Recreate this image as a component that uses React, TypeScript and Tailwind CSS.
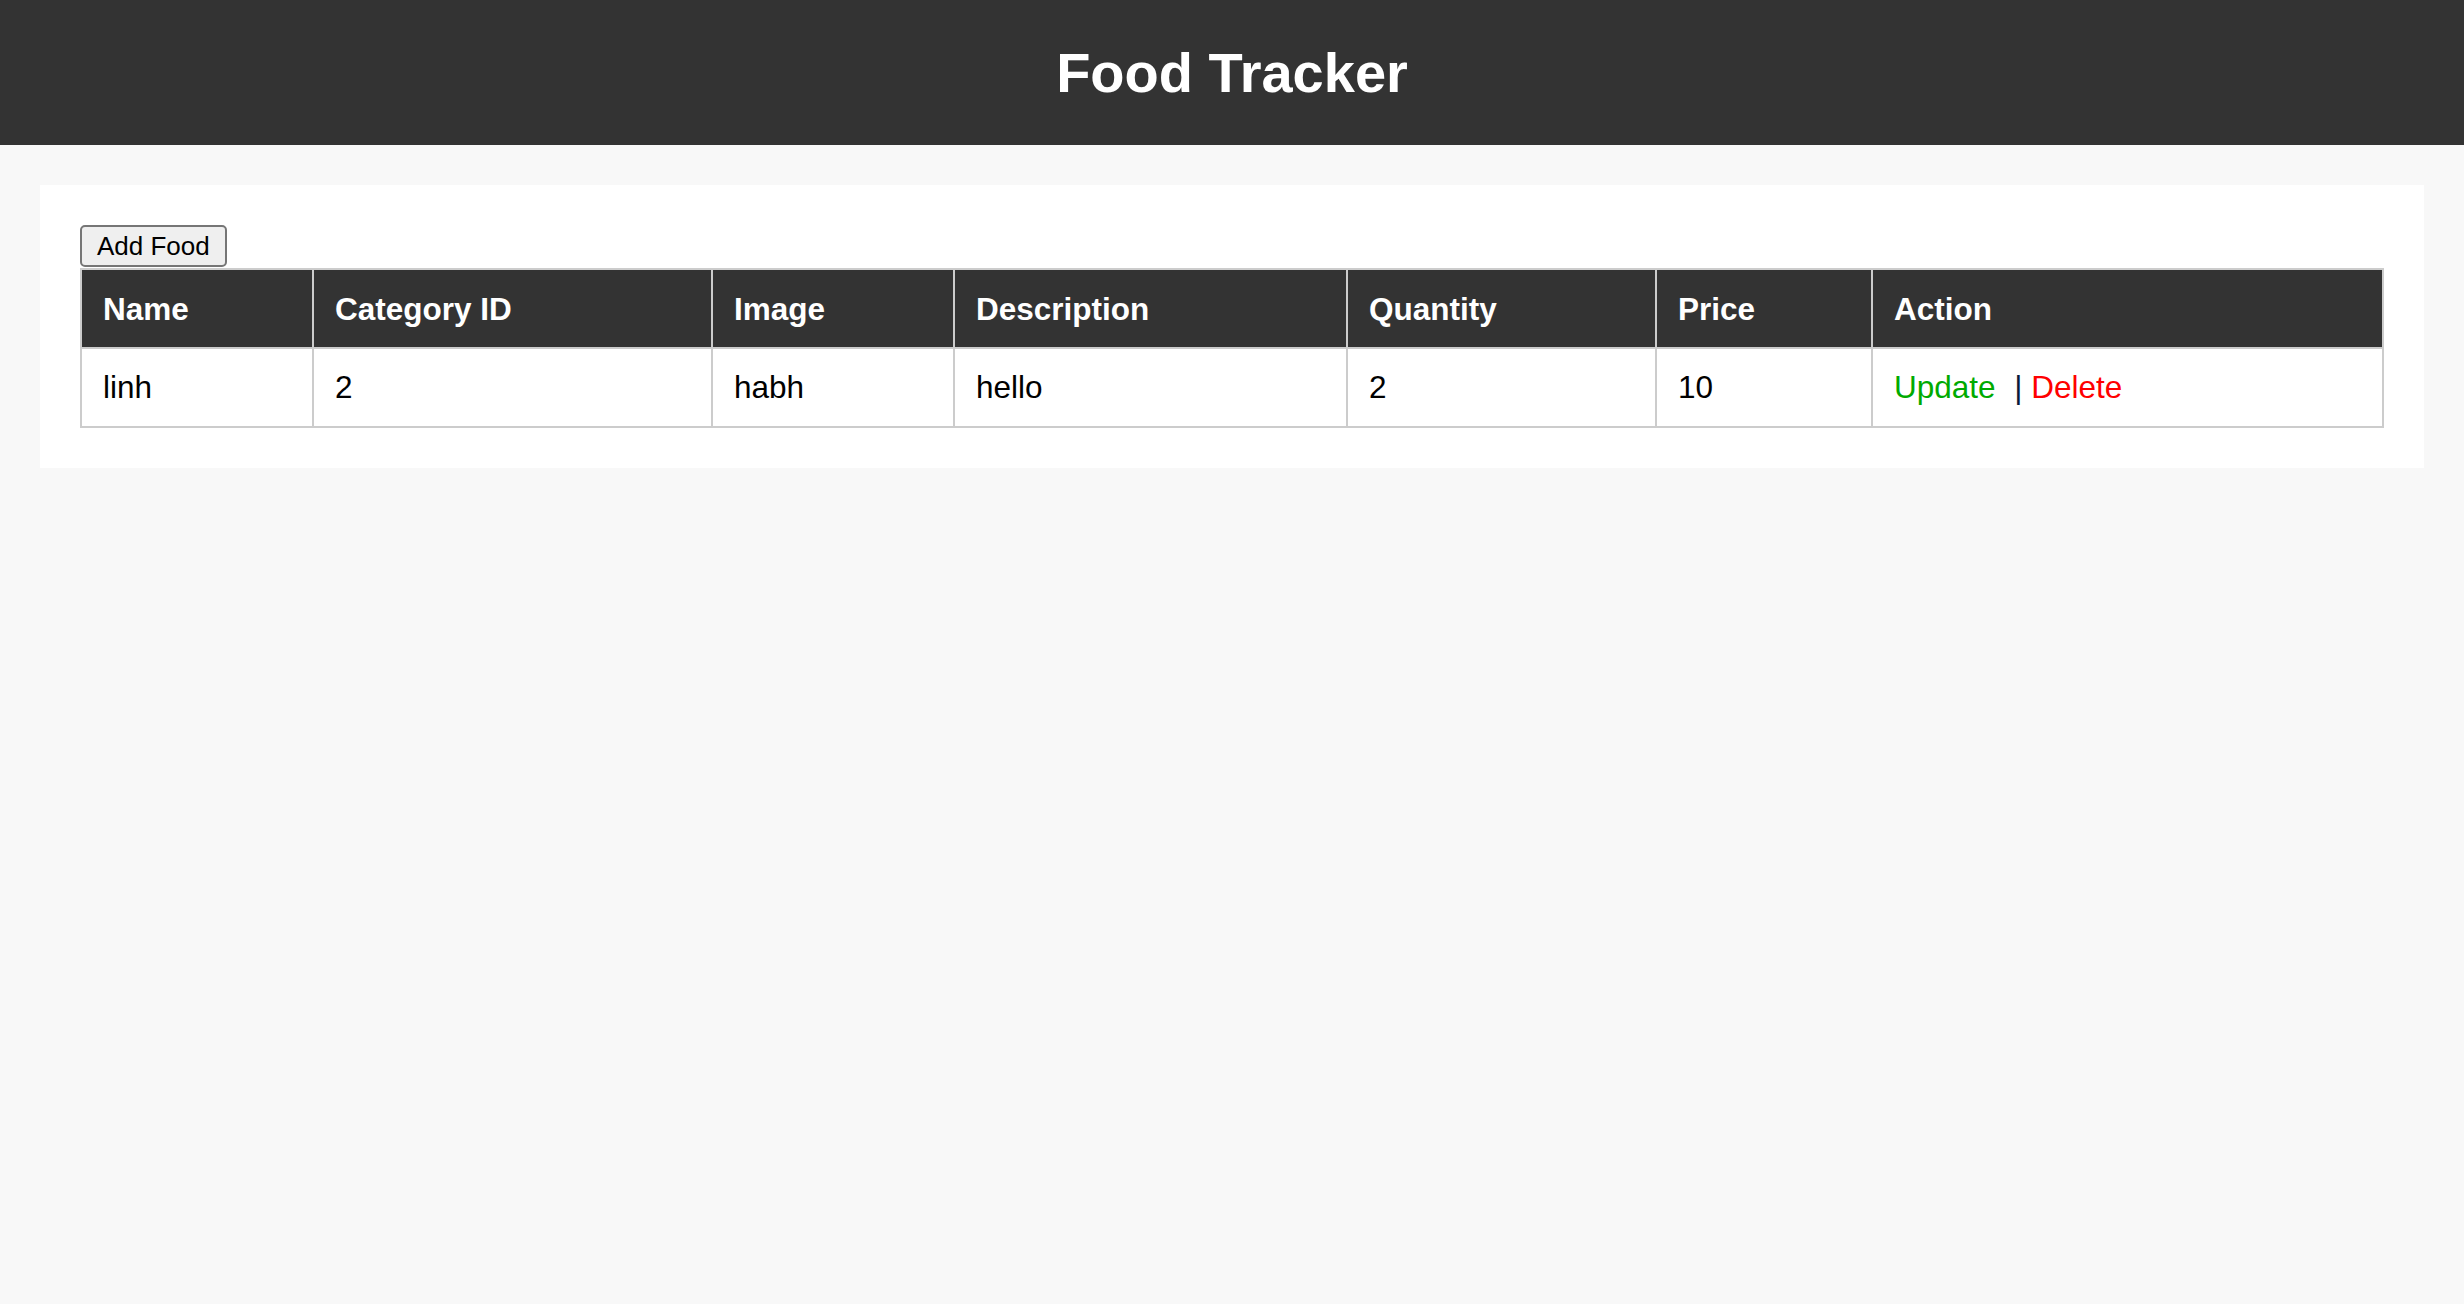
import React from "react";

interface Food {
    name: string;
    categoryId: number;
    image: string;
    description: string;
    quantity: number;
    price: number;
}

const foods: Food[] = [
    { name: "linh", categoryId: 2, image: "habh", description: "hello", quantity: 2, price: 10 },
];

const columns = [
    { label: "Name", width: "w-[232px]" },
    { label: "Category ID", width: "w-[399px]" },
    { label: "Image", width: "w-[242px]" },
    { label: "Description", width: "w-[393px]" },
    { label: "Quantity", width: "w-[309px]" },
    { label: "Price", width: "w-[216px]" },
    { label: "Action", width: "w-[511px]" },
];

const headCell = "border-2 border-[#cccccc] px-[21px] pt-[21px] pb-[20px] text-left align-middle leading-[36px]";
const bodyCell = "border-2 border-[#cccccc] px-[21px] pt-[20px] pb-[21px] text-left align-middle leading-[36px]";

export default function App() {
    return (
        <div className="min-h-screen bg-[#f8f8f8] font-['Liberation_Sans',Arial,sans-serif] text-black">
            <header className="flex h-[145px] items-center justify-center bg-[#333333]">
                <h1 className="text-[56px] font-bold leading-none text-white">Food Tracker</h1>
            </header>

            <main className="p-[40px]">
                <div className="flex flex-col items-start bg-white p-[40px]">
                    <button
                        type="button"
                        className="rounded-[5px] border-2 border-[#767676] bg-[#efefef] px-[15px] py-[4px] text-[26px] leading-[30px] text-black"
                    >
                        Add Food
                    </button>

                    <table className="mt-[1px] w-[2302px] table-fixed border-collapse text-[31.5px]">
                        <thead>
                            <tr className="bg-[#333333] text-white">
                                {columns.map((col) => (
                                    <th key={col.label} className={`${headCell} ${col.width} font-bold`}>
                                        {col.label}
                                    </th>
                                ))}
                            </tr>
                        </thead>
                        <tbody>
                            {foods.map((food) => (
                                <tr key={food.name} className="bg-white">
                                    <td className={bodyCell}>{food.name}</td>
                                    <td className={bodyCell}>{food.categoryId}</td>
                                    <td className={bodyCell}>{food.image}</td>
                                    <td className={bodyCell}>{food.description}</td>
                                    <td className={bodyCell}>{food.quantity}</td>
                                    <td className={bodyCell}>{food.price}</td>
                                    <td className={bodyCell}>
                                        <a href="#" className="mr-[10px] text-[#00aa00]">
                                            Update
                                        </a>{" "}
                                        <span className="text-[#0a1a3a]">|</span>{" "}
                                        <a href="#" className="text-[#ff0000]">
                                            Delete
                                        </a>
                                    </td>
                                </tr>
                            ))}
                        </tbody>
                    </table>
                </div>
            </main>
        </div>
    );
}
